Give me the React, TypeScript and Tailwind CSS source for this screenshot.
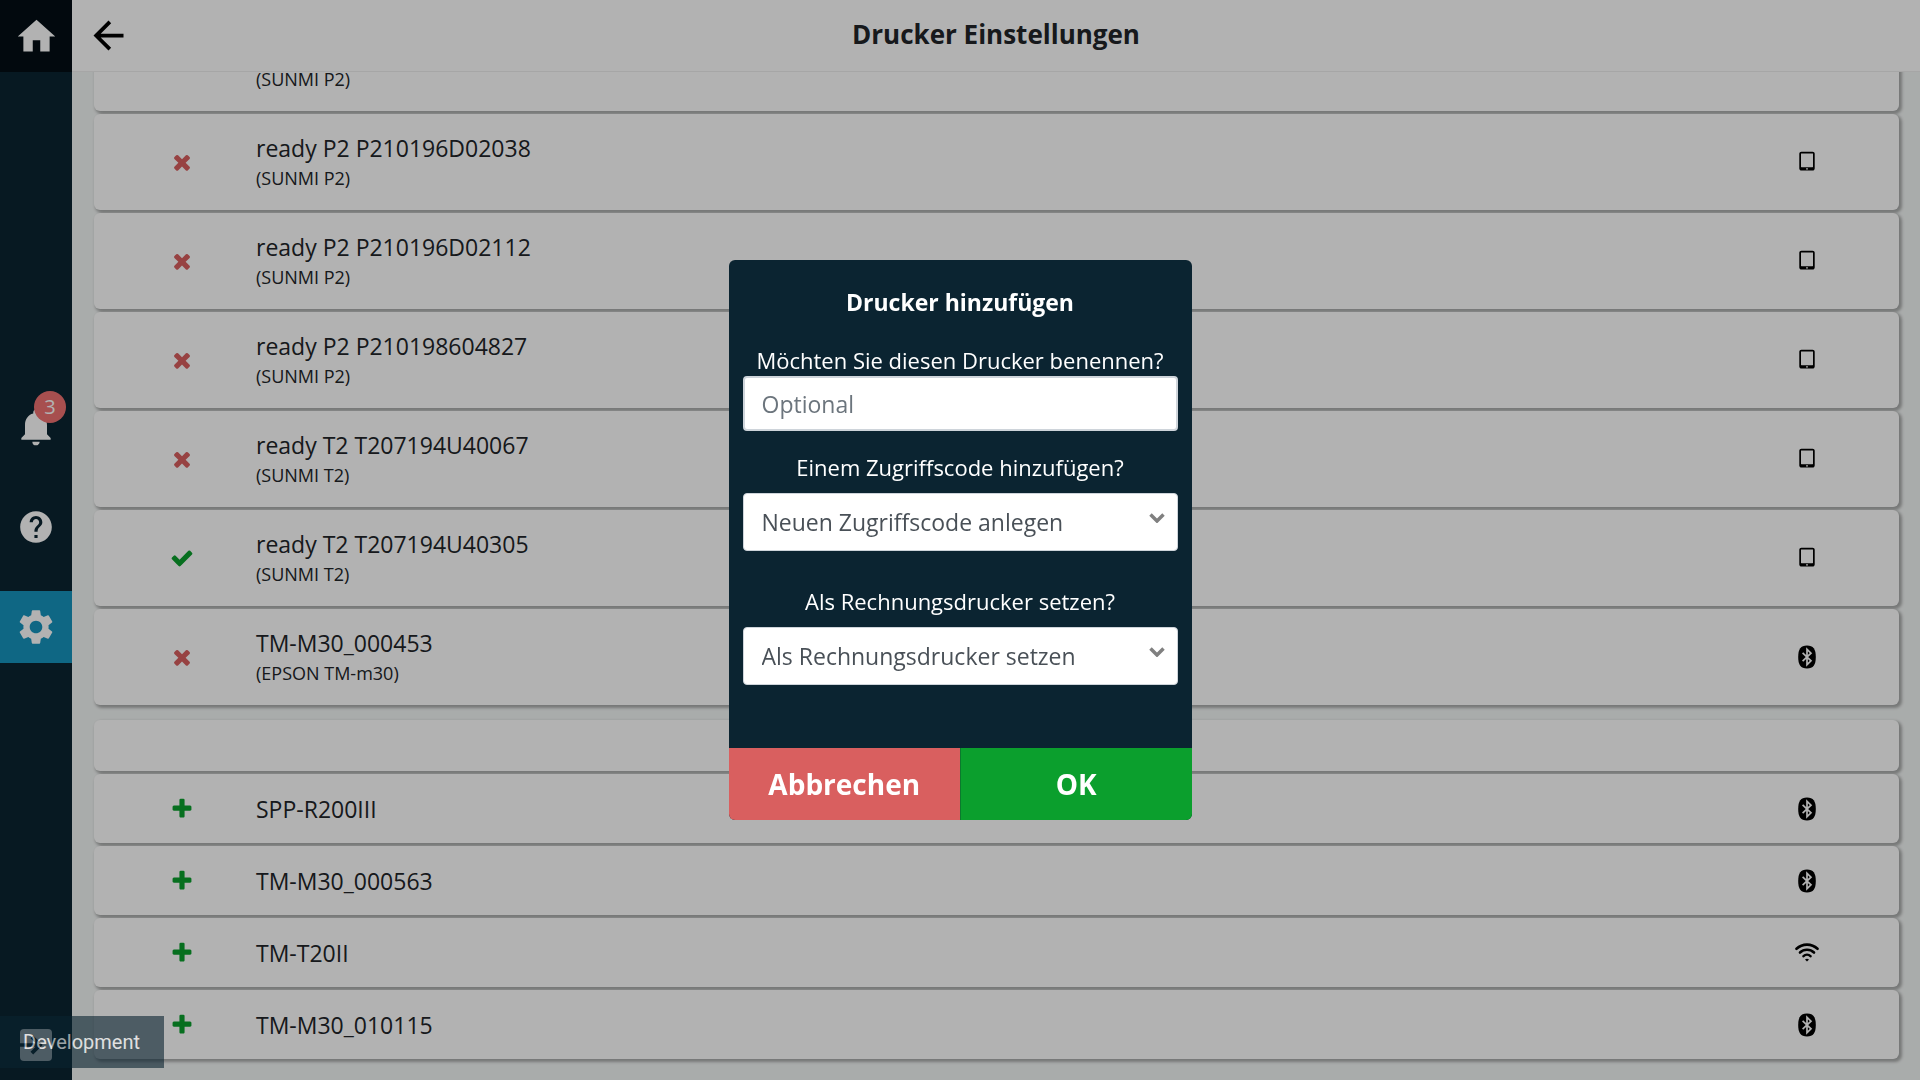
import React, { useState } from "react";
import {
  MdArrowBack,
  MdHelp,
  MdHome,
  MdNotifications,
  MdSettings,
} from "react-icons/md";

type Connection = "tablet" | "bluetooth" | "wifi";
type Status = "off" | "on" | "add";

type Printer = {
  name: string;
  model?: string;
  status: Status;
  connection: Connection;
};

const knownPrinters: Printer[] = [
  { name: "", model: "(SUNMI P2)", status: "off", connection: "tablet" },
  { name: "ready P2 P210196D02038", model: "(SUNMI P2)", status: "off", connection: "tablet" },
  { name: "ready P2 P210196D02112", model: "(SUNMI P2)", status: "off", connection: "tablet" },
  { name: "ready P2 P210198604827", model: "(SUNMI P2)", status: "off", connection: "tablet" },
  { name: "ready T2 T207194U40067", model: "(SUNMI T2)", status: "off", connection: "tablet" },
  { name: "ready T2 T207194U40305", model: "(SUNMI T2)", status: "on", connection: "tablet" },
  { name: "TM-M30_000453", model: "(EPSON TM-m30)", status: "off", connection: "bluetooth" },
];

const newPrinters: Printer[] = [
  { name: "SPP-R200III", status: "add", connection: "bluetooth" },
  { name: "TM-M30_000563", status: "add", connection: "bluetooth" },
  { name: "TM-T20II", status: "add", connection: "wifi" },
  { name: "TM-M30_010115", status: "add", connection: "bluetooth" },
];

const statusIcons = {
  off: {
    label: "Nicht verbunden",
    color: "text-[#d95f5f]",
    path: "M1490 1322q0 40-28 68l-136 136q-28 28-68 28t-68-28l-294-294-294 294q-28 28-68 28t-68-28l-136-136q-28-28-28-68t28-68l294-294-294-294q-28-28-28-68t28-68l136-136q28-28 68-28t68 28l294 294 294-294q28-28 68-28t68 28l136 136q28 28 28 68t-28 68l-294 294 294 294q28 28 28 68z",
  },
  on: {
    label: "Verbunden",
    color: "text-[#0b9f2d]",
    path: "M1671 566q0 40-28 68l-724 724-136 136q-28 28-68 28t-68-28l-136-136-362-362q-28-28-28-68t28-68l136-136q28-28 68-28t68 28l294 295 656-657q28-28 68-28t68 28l136 136q28 28 28 68z",
  },
  add: {
    label: "Hinzufügen",
    color: "text-[#0b9f2d]",
    path: "M1600 736v192q0 40-28 68t-68 28h-416v416q0 40-28 68t-68 28h-192q-40 0-68-28t-28-68v-416h-416q-40 0-68-28t-28-68v-192q0-40 28-68t68-28h416v-416q0-40 28-68t68-28h192q40 0 68 28t28 68v416h416q40 0 68 28t28 68z",
  },
};

function ConnectionIcon({ type }: { type: Connection }) {
  if (type === "bluetooth") {
    return (
      <svg viewBox="0 0 24 24" className="size-6" fill="none">
        <path
          d="M12 .5c6.300 0 8.800 3.600 8.800 11.500s-2.500 11.500-8.800 11.500S3.200 19.900 3.200 12 5.700.5 12 .5z"
          fill="currentColor"
        />
        <path d="M7.600 7.800l8.400 8-4 3.900V4.300l4 3.900-8.400 8" stroke="#fff" strokeWidth="1.700" />
      </svg>
    );
  }
  if (type === "wifi") {
    return (
      <svg viewBox="0 0 24 24" className="size-6" fill="none" stroke="currentColor" strokeWidth="2.6" strokeLinecap="round">
        <path d="M1.500 7.800a15.200 15.200 0 0 1 21 0" />
        <path d="M5 11.500a10.200 10.200 0 0 1 14 0" />
        <path d="M8.500 15.100a5.200 5.200 0 0 1 7 0" />
        <path d="M12 20.500l-2-2q2-1.600 4 0z" fill="currentColor" stroke="none" />
      </svg>
    );
  }
  return (
    <svg viewBox="0 0 1792 1792" className="size-6" fill="currentColor">
      <path d="M960 1408q0-26-19-45t-45-19-45 19-19 45 19 45 45 19 45-19 19-45zm384-160v-960q0-13-9.5-22.5t-22.5-9.5h-832q-13 0-22.5 9.5t-9.5 22.5v960q0 13 9.5 22.5t22.5 9.5h832q13 0 22.5-9.5t9.5-22.5zm128-960v1088q0 66-47 113t-113 47h-832q-66 0-113-47t-47-113v-1088q0-66 47-113t113-47h832q66 0 113 47t47 113z" />
    </svg>
  );
}

function PrinterRow({ printer }: { printer: Printer }) {
  const status = statusIcons[printer.status];
  return (
    <li
      className={`flex shrink-0 items-center rounded-md bg-white pl-16 shadow-[2px_2px_3px_1px_rgba(0,0,0,0.3)] ${
        printer.model ? "h-24" : "h-[69px]"
      }`}
    >
      <button type="button" aria-label={status.label} className={`flex w-12 justify-center ${status.color}`}>
        <svg viewBox="0 0 1792 1792" className="size-6" fill="currentColor">
          <path d={status.path} />
        </svg>
      </button>
      <div className="ml-[50px] flex-1">
        <p className="min-h-8 text-[23px] leading-8 text-[#212529]">{printer.name}</p>
        {printer.model && <p className="text-lg leading-7 text-[#212529]">{printer.model}</p>}
      </div>
      <div className="flex w-46 justify-center text-black">
        <ConnectionIcon type={printer.connection} />
      </div>
    </li>
  );
}

function Sidebar() {
  return (
    <nav className="flex w-18 shrink-0 flex-col bg-[#0b2431] text-white">
      <a href="#home" aria-label="Start" className="flex h-18 items-center justify-center bg-[#030e15]">
        <MdHome className="size-[45px]" />
      </a>
      <div className="mt-auto flex flex-col">
        <a href="#notifications" aria-label="Meldungen" className="relative mb-7 flex h-18 items-center justify-center">
          <MdNotifications className="size-11" />
          <span className="absolute top-0 right-1.5 flex size-8 items-center justify-center rounded-full bg-[#f07272] text-xl">
            3
          </span>
        </a>
        <a href="#help" aria-label="Hilfe" className="mb-7 flex h-18 items-center justify-center">
          <MdHelp className="size-[38px]" />
        </a>
        <a href="#settings" aria-label="Einstellungen" className="flex h-18 items-center justify-center bg-[#1694be]">
          <MdSettings className="size-[42px]" />
        </a>
      </div>
      <a href="#logout" aria-label="Abmelden" className="mt-[347px] flex h-[70px] items-center justify-center">
        <svg viewBox="0 0 32 32" className="size-8">
          <rect width="32" height="32" rx="4" fill="currentColor" />
          <path d="M0 14.200h15.500l-5-5 2.700-2.700L22.700 16l-9.500 9.500-2.700-2.700 5-5H0z" fill="#0b2431" />
        </svg>
      </a>
    </nav>
  );
}

function Chevron() {
  return (
    <svg viewBox="0 0 16 10" className="pointer-events-none absolute top-5 right-[13px] h-2.5 w-4">
      <path d="M1.5 1.5L8 8l6.5-6.5" fill="none" stroke="#808080" strokeWidth="3.5" />
    </svg>
  );
}

function AddPrinterDialog() {
  const [name, setName] = useState("");
  const select =
    "h-[58px] w-full appearance-none rounded border border-[#ced4da] bg-white px-[18px] text-[23px] text-[#495057]";
  return (
    <form
      role="dialog"
      aria-labelledby="dialog-title"
      className="w-[463px] overflow-hidden rounded-md bg-[#0b2431] text-white"
    >
      <div className="flex flex-col px-3.5 pt-6 pb-[63px] text-center">
        <h2 id="dialog-title" className="text-[23px] leading-9 font-bold">
          Drucker hinzufügen
        </h2>
        <label htmlFor="printer-name" className="mt-6 text-[22px] leading-8">
          Möchten Sie diesen Drucker benennen?
        </label>
        <input
          id="printer-name"
          type="text"
          placeholder="Optional"
          value={name}
          onChange={(e) => setName(e.target.value)}
          className="h-[55px] w-full rounded-sm border-2 border-[#ced4da] bg-white px-[17px] text-[23px] text-[#495057] placeholder:text-[#6c757d]"
        />
        <label htmlFor="access-code" className="mt-5 mb-2.5 text-[22px] leading-8">
          Einem Zugriffscode hinzufügen?
        </label>
        <div className="relative">
          <select id="access-code" className={select}>
            <option>Neuen Zugriffscode anlegen</option>
          </select>
          <Chevron />
        </div>
        <label htmlFor="bill-printer" className="mt-8.5 mb-2.5 text-[22px] leading-8">
          Als Rechnungsdrucker setzen?
        </label>
        <div className="relative">
          <select id="bill-printer" className={select}>
            <option>Als Rechnungsdrucker setzen</option>
          </select>
          <Chevron />
        </div>
      </div>
      <div className="grid h-18 grid-cols-2 text-[28px] font-bold">
        <button type="button" className="bg-[#d95f5f]">
          Abbrechen
        </button>
        <button type="button" className="border-l border-[#0b7a2d] bg-[#0b9f2d]">
          OK
        </button>
      </div>
    </form>
  );
}

export default function App() {
  return (
    <div className="flex h-screen overflow-hidden bg-[#f3f6f5] font-['Open_Sans','Noto_Sans',sans-serif]">
      <Sidebar />
      <div className="flex min-w-0 flex-1 flex-col">
        <header className="z-10 grid h-18 shrink-0 grid-cols-[1fr_auto_1fr] items-center border-b border-[#eeeeee] bg-white px-3.5">
          <button type="button" aria-label="Zurück" className="justify-self-start text-black">
            <MdArrowBack className="size-[45px]" />
          </button>
          <h1 className="pb-0.5 text-[26px] font-bold text-[#212529]">Drucker Einstellungen</h1>
        </header>
        <main className="flex min-h-0 flex-1 flex-col justify-end gap-[15px] overflow-hidden pr-[21px] pb-[21px] pl-[22px]">
          <ul className="flex flex-col gap-[3px]">
            {knownPrinters.map((p, i) => (
              <PrinterRow key={i} printer={p} />
            ))}
          </ul>
          <ul className="flex flex-col gap-[3px]">
            <li className="h-[51px] shrink-0 rounded-md bg-white shadow-[2px_2px_3px_1px_rgba(0,0,0,0.3)]" />
            {newPrinters.map((p) => (
              <PrinterRow key={p.name} printer={p} />
            ))}
          </ul>
        </main>
      </div>
      <div className="fixed inset-0 z-20 flex items-center justify-center bg-black/30">
        <AddPrinterDialog />
      </div>
      <div className="fixed bottom-3 left-0 z-30 flex h-[52px] items-center bg-[#0b2431] pr-6 pl-[23px] font-[Roboto,sans-serif] text-xl text-white opacity-60">
        Development
      </div>
    </div>
  );
}
